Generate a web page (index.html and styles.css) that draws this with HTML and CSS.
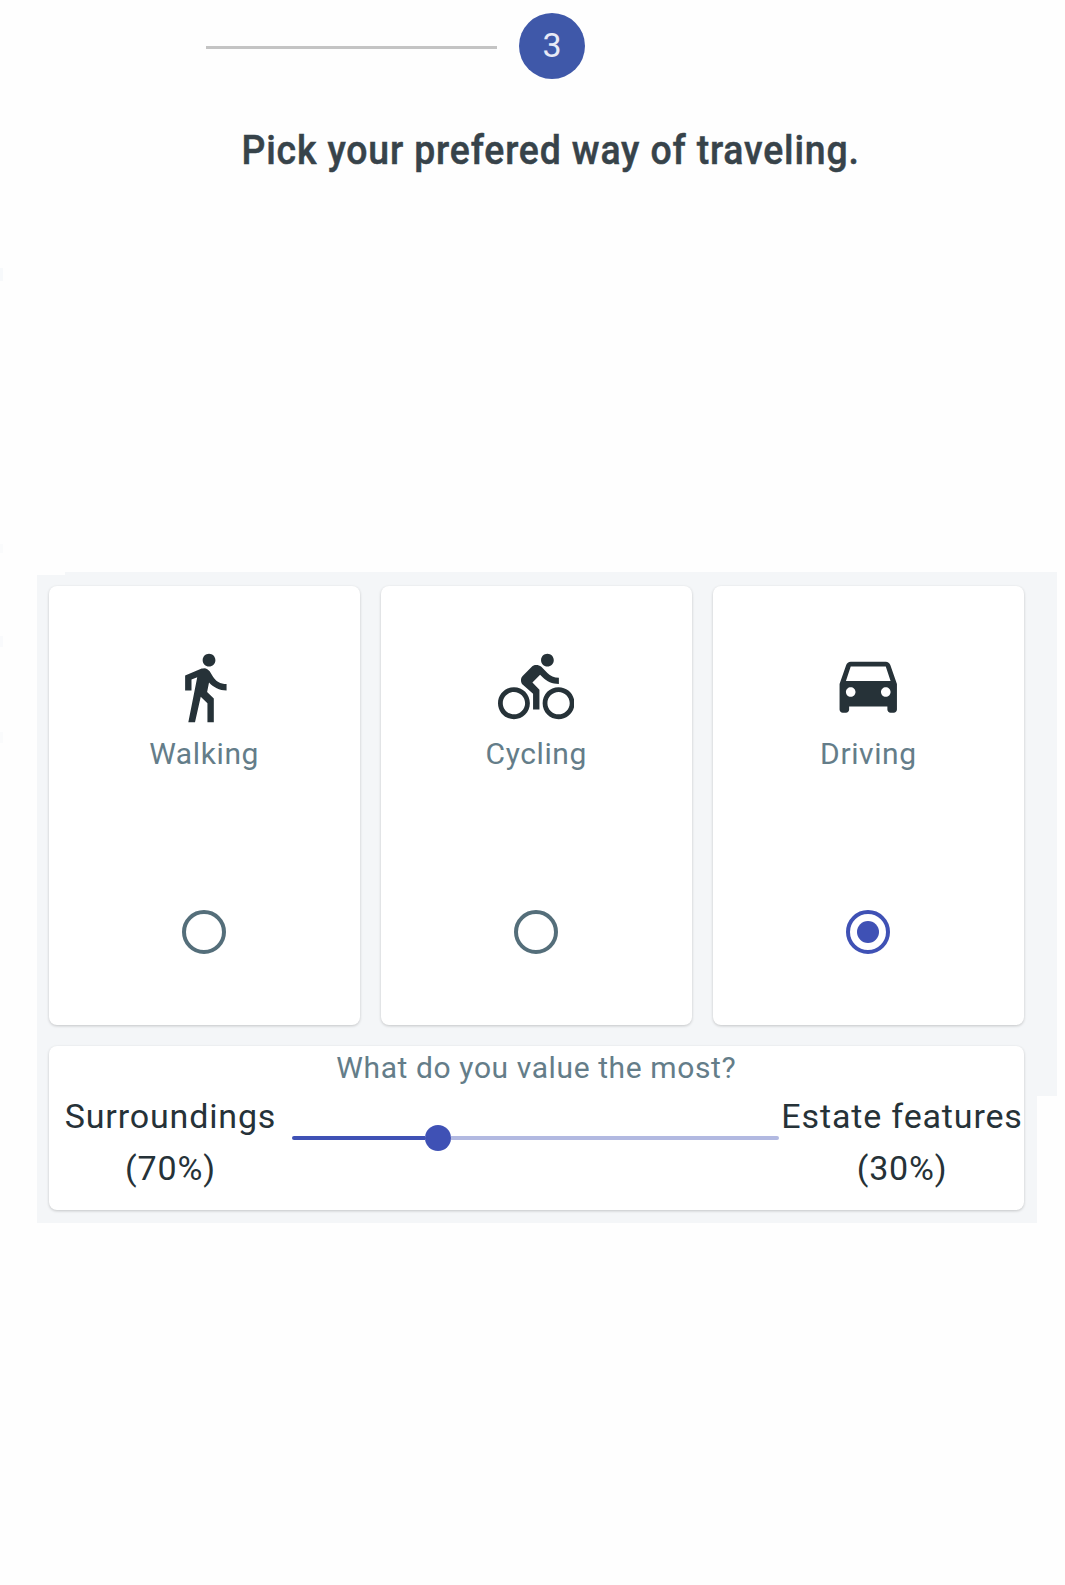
FILE: index.html
```
<!DOCTYPE html>
<html lang="en">
<head>
<meta charset="utf-8">
<title>Travel preferences</title>
<link rel="stylesheet" href="styles.css">
</head>
<body>
<header class="stepper">
  <span class="step-line"></span>
  <span class="step-badge">3</span>
</header>
<h1 class="title"><span class="title-text">Pick your prefered way of traveling.</span></h1>
<main class="panel">
  <section class="options">
    <label class="card option">
      <svg class="icon" viewBox="0 0 24 24"><path d="M13.5 5.5c1.1 0 2-.9 2-2s-.9-2-2-2-2 .9-2 2 .9 2 2 2zM9.8 8.9L7 23h2.1l1.8-8 2.1 2v6h2v-7.5l-2.1-2 .6-3C14.8 12 16.8 13 19 13v-2c-1.9 0-3.5-1-4.3-2.4l-1-1.6c-.4-.6-1-1-1.7-1-.3 0-.5.1-.8.1L6 8.3V13h2V9.6l1.8-.7"/></svg>
      <span class="option-name">Walking</span>
      <span class="radio"></span>
    </label>
    <label class="card option">
      <svg class="icon" viewBox="0 0 24 24"><path d="M15.5 5.5c1.1 0 2-.9 2-2s-.9-2-2-2-2 .9-2 2 .9 2 2 2zM5 12c-2.8 0-5 2.2-5 5s2.2 5 5 5 5-2.2 5-5-2.2-5-5-5zm0 8.5c-1.9 0-3.5-1.6-3.5-3.5s1.6-3.5 3.5-3.5 3.5 1.6 3.5 3.5-1.6 3.5-3.5 3.5zm5.8-10l2.4-2.4.8.8c1.3 1.3 3 2.1 5.1 2.1V9c-1.5 0-2.7-.6-3.6-1.5l-1.9-1.9c-.5-.4-1-.6-1.6-.6s-1.1.2-1.4.6L7.8 8.4c-.4.4-.6.9-.6 1.4 0 .6.2 1.1.6 1.4L11 14v5h2v-6.2l-2.2-2.3zM19 12c-2.8 0-5 2.2-5 5s2.2 5 5 5 5-2.2 5-5-2.2-5-5-5zm0 8.5c-1.9 0-3.5-1.6-3.5-3.5s1.6-3.5 3.5-3.5 3.5 1.6 3.5 3.5-1.6 3.5-3.5 3.5z"/></svg>
      <span class="option-name">Cycling</span>
      <span class="radio"></span>
    </label>
    <label class="card option">
      <svg class="icon" viewBox="0 0 24 24"><path d="M18.92 5.01C18.72 4.42 18.16 4 17.5 4h-11c-.66 0-1.21.42-1.42 1.01L3 11v8c0 .55.45 1 1 1h1c.55 0 1-.45 1-1v-1h12v1c0 .55.45 1 1 1h1c.55 0 1-.45 1-1v-8l-2.08-5.99zM6.5 15c-.83 0-1.5-.67-1.5-1.5S5.67 12 6.5 12s1.5.67 1.5 1.5S7.33 15 6.5 15zm11 0c-.83 0-1.5-.67-1.5-1.5s.67-1.5 1.5-1.5 1.5.67 1.5 1.5-.67 1.5-1.5 1.5zM5 10l1.5-4.5h11L19 10H5z"/></svg>
      <span class="option-name">Driving</span>
      <span class="radio radio-checked"></span>
    </label>
  </section>
  <section class="card values">
    <h2 class="question">What do you value the most?</h2>
    <div class="slider-row">
      <div class="side side-left"><span>Surroundings</span><span>(70%)</span></div>
      <div class="slider"><span class="track-filled"></span><span class="thumb"></span><span class="track-rest"></span></div>
      <div class="side side-right"><span>Estate features</span><span>(30%)</span></div>
    </div>
  </section>
</main>
</body>
</html>
```
FILE: styles.css
```
* { box-sizing: border-box; }
body {
  margin: 0;
  min-height: 1585px;
  background:
    linear-gradient(#f7f9fb, #f7f9fb) 0 268px / 3px 13px no-repeat,
    linear-gradient(#fafbfc, #fafbfc) 0 544px / 3px 9px no-repeat,
    linear-gradient(#f9fafc, #f9fafc) 0 636px / 3px 11px no-repeat,
    linear-gradient(#fafbfc, #fafbfc) 0 732px / 3px 11px no-repeat,
    #fefefe;
  color: #263238;
  font-family: Roboto, "Liberation Sans", sans-serif;
}
.stepper {
  display: flex;
  align-items: center;
  gap: 22px;
  height: 67px;
  margin: 12px 0 0 206px;
}
.step-line {
  width: 291px;
  height: 3px;
  margin-top: 3px;
  background: #c4c4c4;
}
.step-badge {
  width: 66px;
  height: 66px;
  border-radius: 50%;
  background: #3f58a9;
  color: #e8eaf6;
  font-size: 34px;
  line-height: 64px;
  text-align: center;
}
.title {
  margin: 47px 0 0;
  width: 1102px;
  height: 50px;
  font-size: 40px;
  line-height: 50px;
  font-weight: 500;
  letter-spacing: .9px;
  text-align: center;
  color: #37434a;
  white-space: nowrap;
}
.title-text {
  display: inline-block;
  transform: scaleX(.935);
  -webkit-text-stroke: .5px #37434a;
}
.panel {
  width: 1020px;
  height: 651px;
  margin: 396px 0 0 37px;
  padding: 14px 33px 12px 11.5px;
  display: flex;
  flex-direction: column;
  gap: 21px;
  background: #f4f6f8;
  clip-path: polygon(0 3px, 28px 3px, 28px 0, 100% 0, 100% 524px, 1000px 524px, 1000px 100%, 0 100%);
}
.options {
  display: grid;
  grid-template-columns: repeat(3, 1fr);
  gap: 21px;
}
.card {
  background: #fff;
  border-radius: 8px;
  box-shadow: 0 1px 3px rgba(0, 0, 0, .2);
}
.option {
  height: 439px;
  display: flex;
  flex-direction: column;
  align-items: center;
  padding-top: 63px;
}
.icon { width: 76.5px; height: 76.5px; fill: #263238; }
.option-name {
  margin-top: 8.5px;
  font-size: 30px;
  line-height: 40px;
  letter-spacing: .6px;
  color: #647d89;
}
.radio {
  display: grid;
  place-items: center;
  width: 44px;
  height: 44px;
  margin-top: 136px;
  border: 4px solid #546e7a;
  border-radius: 50%;
}
.radio-checked { border-color: #3f51b5; }
.radio-checked::after {
  content: "";
  width: 22px;
  height: 22px;
  border-radius: 50%;
  background: #3f51b5;
}
.values { height: 164px; }
.question {
  margin: 0;
  padding-top: 2px;
  font-size: 30px;
  line-height: 40px;
  font-weight: 400;
  letter-spacing: .6px;
  text-align: center;
  color: #647d89;
}
.slider-row { display: flex; height: 104px; padding-top: 2px; white-space: nowrap; }
.side {
  display: flex;
  flex-direction: column;
  align-items: center;
  font-size: 34px;
  line-height: 52px;
  letter-spacing: .85px;
}
.side-left { width: 244px; }
.side-right { width: 245px; padding-left: 1px; }
.slider {
  display: flex;
  align-items: center;
  width: 487px;
  height: 26px;
  margin-top: 35px;
}
.track-filled { width: 133px; height: 4px; border-radius: 2px 0 0 2px; background: #3f51b5; }
.thumb { width: 26px; height: 26px; border-radius: 50%; background: #3f51b5; }
.track-rest { flex: 1; height: 4px; border-radius: 0 2px 2px 0; background: #b2b9e1; }
```
